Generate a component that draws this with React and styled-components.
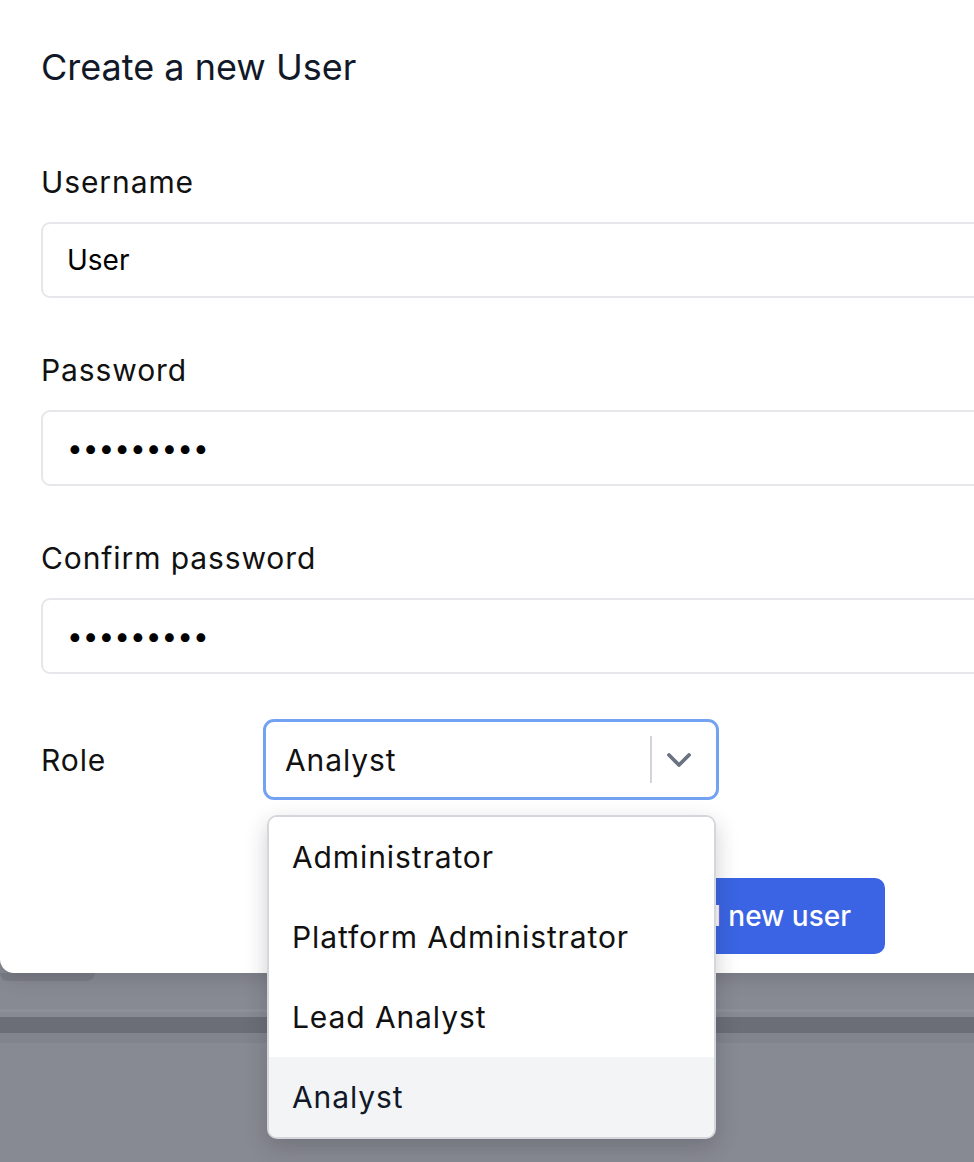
import styled, { createGlobalStyle } from 'styled-components';

const roles = ['Administrator', 'Platform Administrator', 'Lead Analyst', 'Analyst'];

const GlobalStyle = createGlobalStyle`
  html, body {
    margin: 0;
    padding: 0;
    overflow: hidden;
    background: #888a93;
  }
  body {
    font-family: Inter, "Noto Sans", "Liberation Sans", sans-serif;
  }
`;

export default function App() {
  const selected = 'Analyst';

  return (
    <Backdrop>
      <GlobalStyle />
      <Modal>
        <Title>Create a new User</Title>

        {/* 입력 필드 */}
        <Form>
          <Field>
            <Label>Username</Label>
            <TextInput type="text" value="User" readOnly />
          </Field>
          <Field>
            <Label>Password</Label>
            <TextInput type="password" value="password1" readOnly />
          </Field>
          <Field>
            <Label>Confirm password</Label>
            <TextInput type="password" value="password1" readOnly />
          </Field>
        </Form>

        {/* 역할 선택 */}
        <RoleRow>
          <RoleLabel>Role</RoleLabel>
          <SelectWrap>
            <SelectBox>
              <SelectValue>{selected}</SelectValue>
              <Separator />
              <Chevron viewBox="0 0 24 14" width="24" height="14">
                <polyline points="2,2 12,12 22,2" fill="none" stroke="#6b7280" strokeWidth="3.8" strokeLinecap="round" strokeLinejoin="round" />
              </Chevron>
            </SelectBox>
            <Menu>
              {roles.map((role) => (
                <MenuItem key={role} $active={role === selected}>{role}</MenuItem>
              ))}
            </Menu>
          </SelectWrap>
        </RoleRow>

        <Footer>
          <PrimaryButton>Add new user</PrimaryButton>
        </Footer>
      </Modal>

      {/* 모달 뒤의 페이지 */}
      <BehindPage>
        <Tab />
        <ThinLine />
        <DarkBand />
        <LightBand />
      </BehindPage>
    </Backdrop>
  );
}

const Backdrop = styled.div`
  width: 974px;
  height: 1162px;
  overflow: hidden;
  background: #888a93;
  display: flex;
  flex-direction: column;
`;

const Modal = styled.div`
  position: relative;
  z-index: 2;
  width: 1200px;
  flex-shrink: 0;
  box-sizing: border-box;
  padding: 43px 40px 19px 41px;
  background: #ffffff;
  border-radius: 0 0 14px 14px;
  box-shadow: 0 6px 18px rgba(40, 42, 50, 0.18);
`;

const Title = styled.h2`
  margin: 0;
  font-size: 36px;
  line-height: 48px;
  font-weight: 400;
  color: #111827;
`;

const Form = styled.div`
  margin-top: 71px;
  display: flex;
  flex-direction: column;
  gap: 52px;
`;

const Field = styled.div`
  display: flex;
  flex-direction: column;
  gap: 20px;
`;

const Label = styled.label`
  font-size: 30px;
  line-height: 40px;
  letter-spacing: 0.9px;
  color: #111111;
`;

const TextInput = styled.input`
  box-sizing: border-box;
  width: 100%;
  height: 76px;
  padding: 0 24px;
  border: 2px solid #e5e7eb;
  border-radius: 9px;
  background: #ffffff;
  font-family: inherit;
  font-size: 28px;
  color: #000000;
  outline: none;
`;

const RoleRow = styled.div`
  margin-top: 45px;
  display: flex;
  align-items: center;
`;

const RoleLabel = styled.div`
  width: 222px;
  font-size: 30px;
  line-height: 40px;
  letter-spacing: 0.9px;
  color: #111111;
`;

const SelectWrap = styled.div`
  position: relative;
  width: 456px;
`;

const SelectBox = styled.div`
  box-sizing: border-box;
  height: 81px;
  display: flex;
  align-items: center;
  padding: 0 25px 0 19px;
  border: 3px solid #72a2f1;
  border-radius: 11px;
  background: #ffffff;
`;

const SelectValue = styled.div`
  flex: 1;
  font-size: 30px;
  letter-spacing: 0.9px;
  color: #111111;
`;

const Separator = styled.div`
  width: 2px;
  height: 47px;
  background: #d1d5db;
  margin-right: 15px;
`;

const Chevron = styled.svg`
  display: block;
`;

const Menu = styled.div`
  position: absolute;
  top: 96px;
  left: 4px;
  width: 449px;
  box-sizing: border-box;
  border: 2px solid #d4d6db;
  border-radius: 10px;
  background: #ffffff;
  overflow: hidden;
  box-shadow: 0 8px 22px rgba(30, 32, 40, 0.22);
  z-index: 5;
`;

const MenuItem = styled.div`
  height: 80px;
  display: flex;
  align-items: center;
  padding-left: 23px;
  font-size: 30px;
  letter-spacing: 0.9px;
  color: ${(p) => (p.$active ? '#111827' : '#111111')};
  background: ${(p) => (p.$active ? '#f3f4f6' : '#ffffff')};
`;

const Footer = styled.div`
  margin-top: 78px;
  width: 844px;
  display: flex;
  justify-content: flex-end;
`;

const PrimaryButton = styled.button`
  height: 76px;
  padding: 0 34px;
  border: none;
  border-radius: 10px;
  background: #3a64e3;
  color: #ffffff;
  font-family: inherit;
  font-size: 28px;
  font-weight: 500;
`;

const BehindPage = styled.div`
  display: flex;
  flex-direction: column;
`;

const Tab = styled.div`
  width: 95px;
  height: 8px;
  background: #7b7d86;
  border-radius: 0 0 10px 10px;
`;

const ThinLine = styled.div`
  margin-top: 28px;
  height: 3px;
  background: #8e9098;
`;

const DarkBand = styled.div`
  margin-top: 5px;
  height: 16px;
  background: #6b6d77;
`;

const LightBand = styled.div`
  height: 10px;
  background: #82848d;
`;
